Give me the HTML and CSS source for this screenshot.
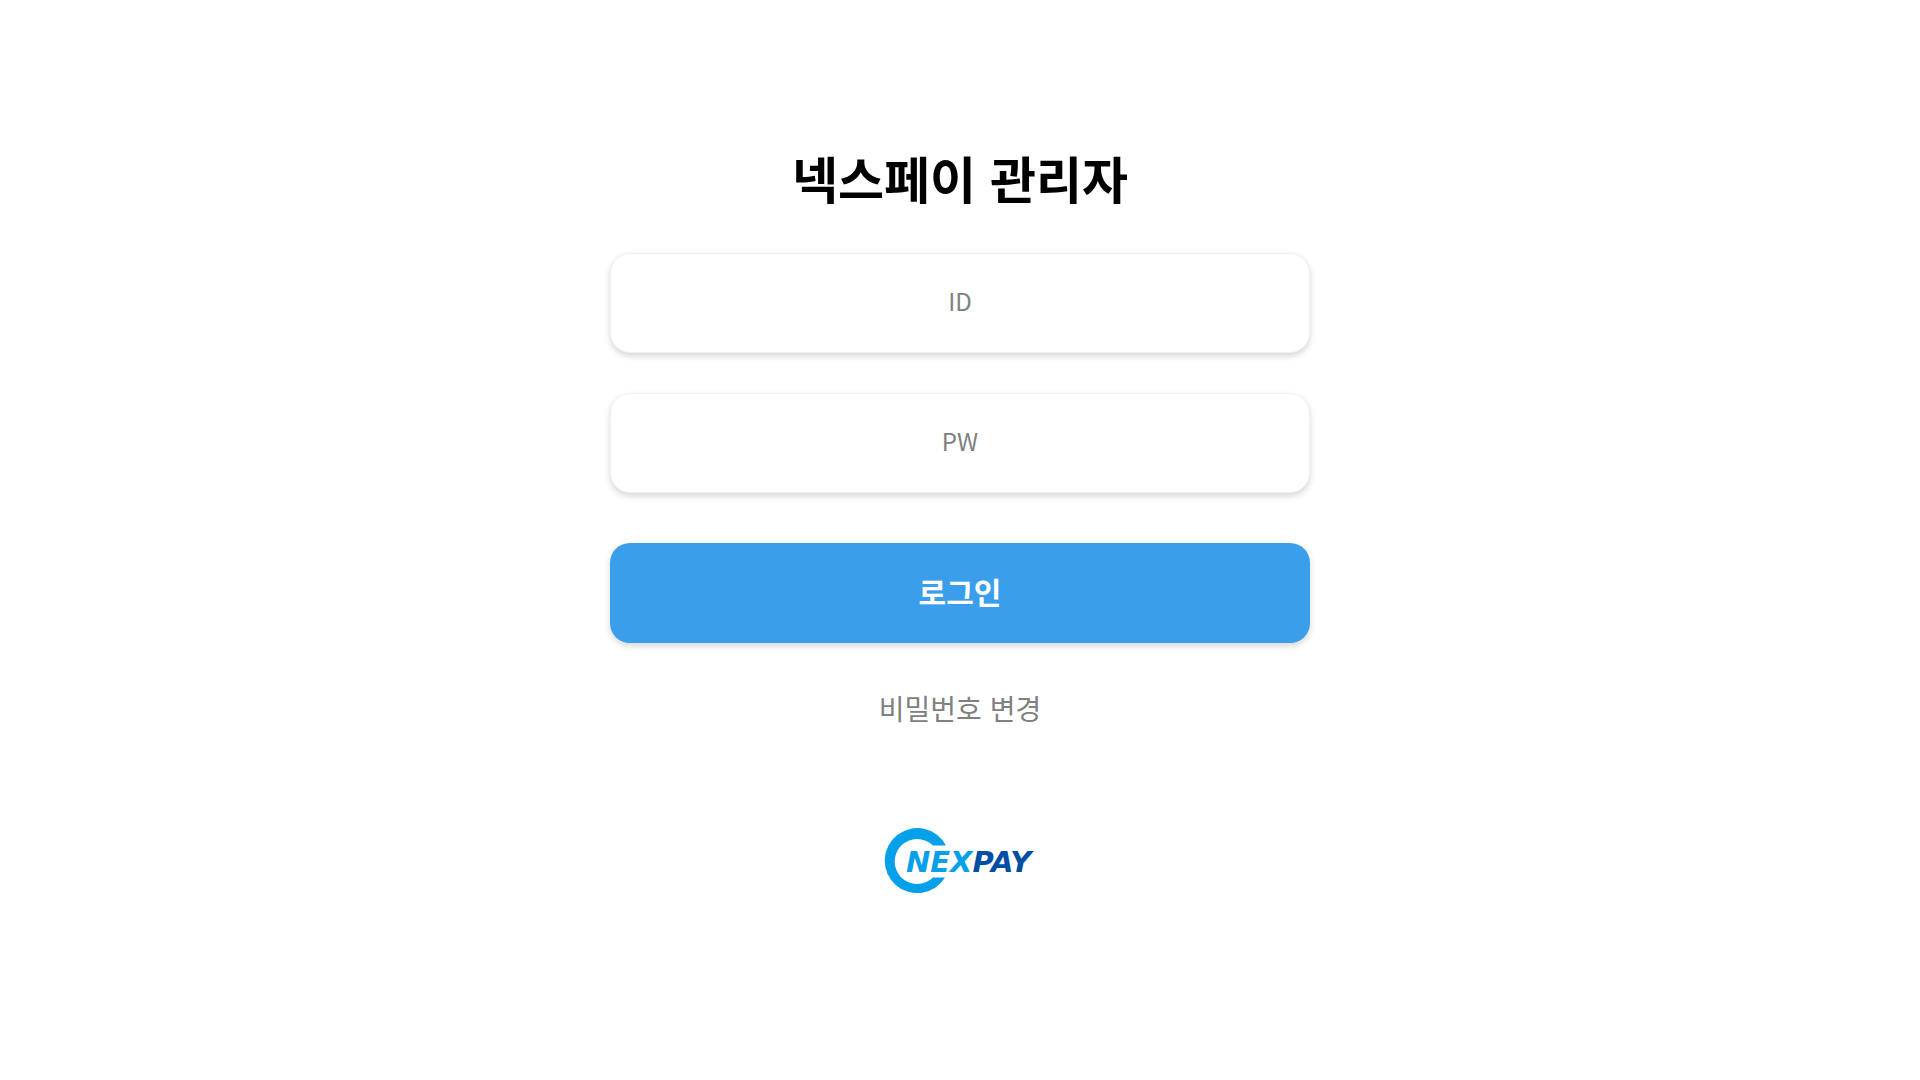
FILE: index.html
```
<!DOCTYPE html>
<html lang="ko">
  <head>
    <meta charset="UTF-8" />
    <meta name="viewport" content="width=device-width, initial-scale=1" />
    <title>넥스페이 관리자</title>
    <link rel="stylesheet" href="styles.css">
  </head>
  <body>
    <main class="login">
      <h1 class="login-title">넥스페이 관리자</h1>

      <form class="login-form">
        <input
          class="login-input"
          type="text"
          name="id"
          placeholder="ID"
          aria-label="ID"
        />
        <input
          class="login-input"
          type="password"
          name="pw"
          placeholder="PW"
          aria-label="PW"
        />
        <button class="login-btn" type="submit">로그인</button>
      </form>

      <a href="#" class="password-link">비밀번호 변경</a>

      <svg
        class="logo"
        viewBox="0 0 152 66"
        role="img"
        aria-label="NEXPAY"
        xmlns="http://www.w3.org/2000/svg"
      >
        <path
          class="logo-ring"
          d="M62 17.5A32.5 32.5 0 1 0 61 49.5H49A22.5 22.5 0 1 1 49 17.5Z"
        />
        <text class="logo-text" x="22" y="44">NEX<tspan class="logo-pay">PAY</tspan></text>
      </svg>
    </main>
  </body>
</html>
```

FILE: styles.css
```
* {
  box-sizing: border-box;
}
body {
  font-family: "Noto Sans CJK KR", "Noto Sans", sans-serif;
  margin: 0;
  background-color: #fff;
  color: #000;
}
.login {
  display: flex;
  flex-direction: column;
  align-items: center;
  max-width: 740px;
  margin: 0 auto;
  padding: 141px 20px 40px;
}
.login-title {
  margin: 0 0 40px;
  font-size: 50px;
  line-height: 72px;
  font-weight: bold;
}
.login-form {
  display: flex;
  flex-direction: column;
  gap: 40px;
  width: 100%;
}
.login-input,
.login-btn {
  width: 100%;
  height: 100px;
  padding: 0 20px 5px;
  border: none;
  border-radius: 20px;
  font-family: inherit;
  text-align: center;
  box-shadow: 0 3px 6px rgba(0, 0, 0, 0.16);
}
.login-input {
  border: 1px solid #f0f0f0;
  background-color: #fff;
  color: #000;
  font-size: 24px;
}
.login-input::placeholder {
  color: #808080;
  opacity: 1;
}
.login-btn {
  margin-top: 10px;
  background-color: #3b9eea;
  color: #fff;
  font-size: 30px;
  font-weight: bold;
  cursor: pointer;
}
.password-link {
  margin-top: 45px;
  color: #808080;
  font-size: 28px;
  line-height: 40px;
  text-decoration: none;
}
.logo {
  width: 152px;
  height: 66px;
  margin-top: 100px;
}
.logo-ring {
  fill: #05a0ea;
}
.logo-text {
  font-family: "DejaVu Sans", sans-serif;
  font-size: 29px;
  font-weight: bold;
  font-style: italic;
  fill: #05a0ea;
}
.logo-pay {
  fill: #004ea2;
}
```
